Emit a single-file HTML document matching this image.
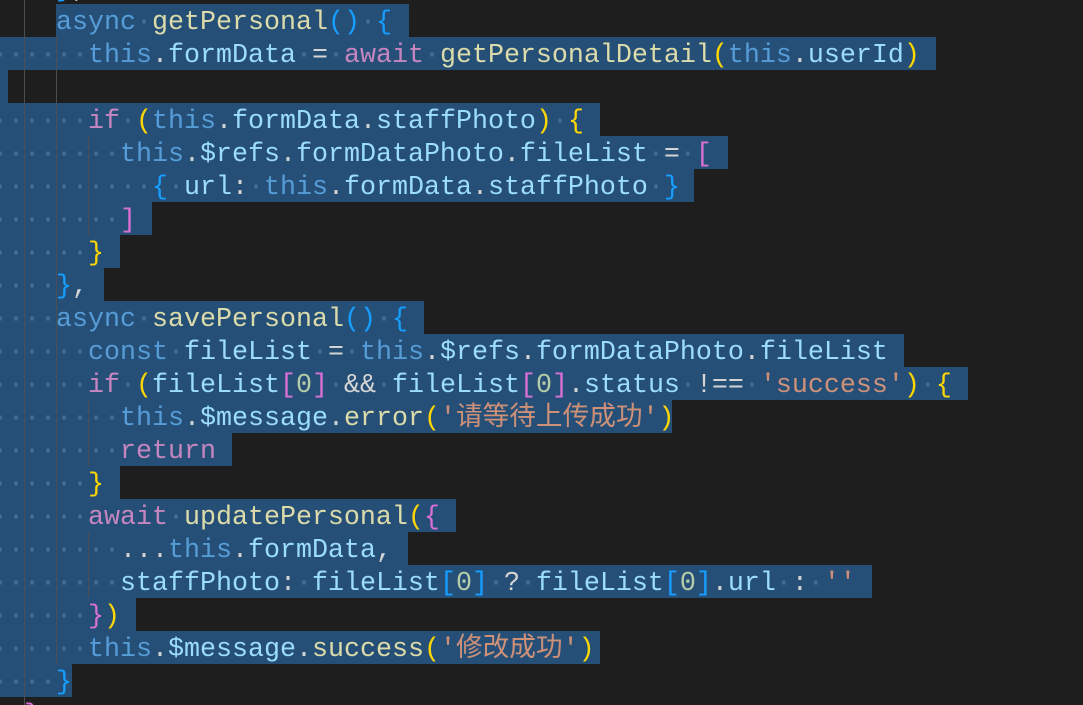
<!DOCTYPE html>
<html><head><meta charset="utf-8"><style>
html,body{margin:0;padding:0;background:#1e1e1e;width:1083px;height:705px;overflow:hidden;position:relative}
.s{position:absolute;height:33px;background:#264f78}
.g{position:absolute;width:1px;background:#4a4f55}
.l{position:absolute;left:-8px;height:33px;line-height:33px;margin-top:3px;white-space:pre;font-family:"Liberation Mono","Noto Sans CJK SC",monospace;font-size:26.67px;color:#d4d4d4}
.d{color:#4b6f93}
.k{color:#569cd6}.p{color:#9cdcfe}.f{color:#dcdcaa}.c{color:#c586c0}.r{color:#ce9178}.n{color:#b5cea8}
.y{color:#ffd700}.m{color:#da70d6}.b{color:#179fff}
</style></head><body>
<div class="s" style="top:4px;left:56px;width:353px"></div>
<div class="s" style="top:37px;left:0;width:936px"></div>
<div class="s" style="top:70px;left:0;width:8px"></div>
<div class="s" style="top:103px;left:0;width:600px"></div>
<div class="s" style="top:136px;left:0;width:728px"></div>
<div class="s" style="top:169px;left:0;width:694px"></div>
<div class="s" style="top:202px;left:0;width:152px"></div>
<div class="s" style="top:235px;left:0;width:120px"></div>
<div class="s" style="top:268px;left:0;width:104px"></div>
<div class="s" style="top:301px;left:0;width:424px"></div>
<div class="s" style="top:334px;left:0;width:904px"></div>
<div class="s" style="top:367px;left:0;width:968px"></div>
<div class="s" style="top:400px;left:0;width:672px"></div>
<div class="s" style="top:433px;left:0;width:232px"></div>
<div class="s" style="top:466px;left:0;width:120px"></div>
<div class="s" style="top:499px;left:0;width:456px"></div>
<div class="s" style="top:532px;left:0;width:408px"></div>
<div class="s" style="top:565px;left:0;width:872px"></div>
<div class="s" style="top:598px;left:0;width:136px"></div>
<div class="s" style="top:631px;left:0;width:600px"></div>
<div class="s" style="top:664px;left:0;width:72px"></div>

<div class="g" style="left:24px;top:0;height:705px"></div>
<div class="g" style="left:56px;top:37px;height:627px"></div>
<div class="g" style="left:88px;top:136px;height:99px"></div>
<div class="g" style="left:88px;top:400px;height:66px"></div>
<div class="g" style="left:88px;top:532px;height:66px"></div>

<div class="l" style="top:-29px">    <span class="b">}</span>,</div>
<div class="l" style="top:4px">    <span class="k">async</span><span class="d">·</span><span class="f">getPersonal</span><span class="b">()</span><span class="d">·</span><span class="b">{</span></div>
<div class="l" style="top:37px"><span class="d">······</span><span class="k">this</span>.<span class="p">formData</span><span class="d">·</span>=<span class="d">·</span><span class="c">await</span><span class="d">·</span><span class="f">getPersonalDetail</span><span class="y">(</span><span class="k">this</span>.<span class="p">userId</span><span class="y">)</span></div>
<div class="l" style="top:103px"><span class="d">······</span><span class="c">if</span><span class="d">·</span><span class="y">(</span><span class="k">this</span>.<span class="p">formData</span>.<span class="p">staffPhoto</span><span class="y">)</span><span class="d">·</span><span class="y">{</span></div>
<div class="l" style="top:136px"><span class="d">········</span><span class="k">this</span>.<span class="p">$refs</span>.<span class="p">formDataPhoto</span>.<span class="p">fileList</span><span class="d">·</span>=<span class="d">·</span><span class="m">[</span></div>
<div class="l" style="top:169px"><span class="d">··········</span><span class="b">{</span><span class="d">·</span><span class="p">url</span>:<span class="d">·</span><span class="k">this</span>.<span class="p">formData</span>.<span class="p">staffPhoto</span><span class="d">·</span><span class="b">}</span></div>
<div class="l" style="top:202px"><span class="d">········</span><span class="m">]</span></div>
<div class="l" style="top:235px"><span class="d">······</span><span class="y">}</span></div>
<div class="l" style="top:268px"><span class="d">····</span><span class="b">}</span>,</div>
<div class="l" style="top:301px"><span class="d">····</span><span class="k">async</span><span class="d">·</span><span class="f">savePersonal</span><span class="b">()</span><span class="d">·</span><span class="b">{</span></div>
<div class="l" style="top:334px"><span class="d">······</span><span class="k">const</span><span class="d">·</span><span class="p">fileList</span><span class="d">·</span>=<span class="d">·</span><span class="k">this</span>.<span class="p">$refs</span>.<span class="p">formDataPhoto</span>.<span class="p">fileList</span></div>
<div class="l" style="top:367px"><span class="d">······</span><span class="c">if</span><span class="d">·</span><span class="y">(</span><span class="p">fileList</span><span class="m">[</span><span class="n">0</span><span class="m">]</span><span class="d">·</span>&amp;&amp;<span class="d">·</span><span class="p">fileList</span><span class="m">[</span><span class="n">0</span><span class="m">]</span>.<span class="p">status</span><span class="d">·</span>!==<span class="d">·</span><span class="r">'success'</span><span class="y">)</span><span class="d">·</span><span class="y">{</span></div>
<div class="l" style="top:400px"><span class="d">········</span><span class="k">this</span>.<span class="p">$message</span>.<span class="f">error</span><span class="y">(</span><span class="r">'请等待上传成功'</span><span class="y">)</span></div>
<div class="l" style="top:433px"><span class="d">········</span><span class="c">return</span></div>
<div class="l" style="top:466px"><span class="d">······</span><span class="y">}</span></div>
<div class="l" style="top:499px"><span class="d">······</span><span class="c">await</span><span class="d">·</span><span class="f">updatePersonal</span><span class="y">(</span><span class="m">{</span></div>
<div class="l" style="top:532px"><span class="d">········</span>...<span class="k">this</span>.<span class="p">formData</span>,</div>
<div class="l" style="top:565px"><span class="d">········</span><span class="p">staffPhoto</span>:<span class="d">·</span><span class="p">fileList</span><span class="b">[</span><span class="n">0</span><span class="b">]</span><span class="d">·</span>?<span class="d">·</span><span class="p">fileList</span><span class="b">[</span><span class="n">0</span><span class="b">]</span>.<span class="p">url</span><span class="d">·</span>:<span class="d">·</span><span class="r">''</span></div>
<div class="l" style="top:598px"><span class="d">······</span><span class="m">}</span><span class="y">)</span></div>
<div class="l" style="top:631px"><span class="d">······</span><span class="k">this</span>.<span class="p">$message</span>.<span class="f">success</span><span class="y">(</span><span class="r">'修改成功'</span><span class="y">)</span></div>
<div class="l" style="top:664px"><span class="d">····</span><span class="b">}</span></div>
<div class="l" style="top:697px">  <span class="m">}</span></div>
</body></html>
